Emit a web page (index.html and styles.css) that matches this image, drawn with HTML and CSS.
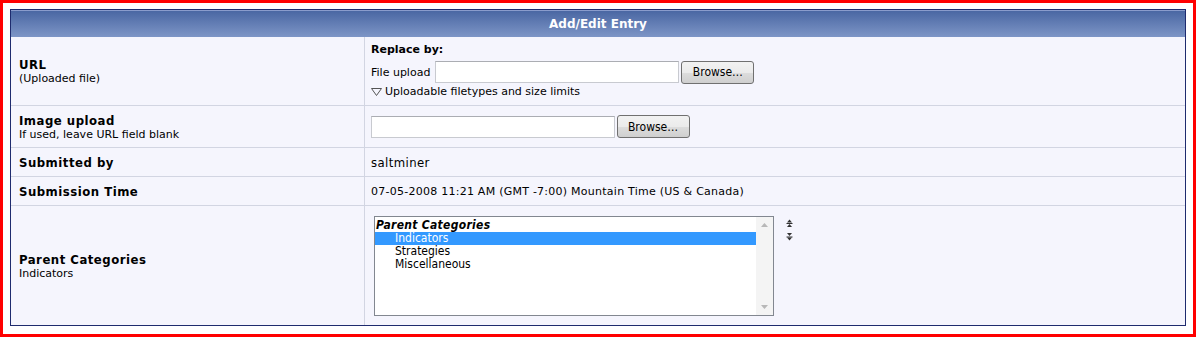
FILE: index.html
```html
<!DOCTYPE html>
<html lang="en">
<head>
    <meta charset="UTF-8">
    <title>Add/Edit Entry</title>
    <link rel="stylesheet" href="styles.css">
</head>
<body>

    <!-- Red frame round the whole form -->
    <div class="frame">
        <table class="entry">
            <colgroup>
                <col class="col-label">
                <col>
            </colgroup>

            <tr class="row-head">
                <th colspan="2">Add/Edit Entry</th>
            </tr>

            <!-- URL -->
            <tr class="row-url">
                <td class="label"><b>URL</b><span>(Uploaded file)</span></td>
                <td class="value">
                    <div class="replace">Replace by:</div>
                    <div class="upload-line">
                        File upload
                        <input type="text" class="text-box">
                        <button class="browse">Browse…</button>
                    </div>
                    <div class="limits">
                        <svg width="11" height="8" viewBox="0 0 11 8"><path d="M0.5 0.5 H10.5 L5.5 7.5 Z" fill="none" stroke="#555" stroke-width="1"/></svg>
                        Uploadable filetypes and size limits
                    </div>
                </td>
            </tr>

            <!-- Image upload -->
            <tr class="row-image">
                <td class="label"><b>Image upload</b><span>If used, leave URL field blank</span></td>
                <td class="value">
                    <input type="text" class="text-box">
                    <button class="browse">Browse…</button>
                </td>
            </tr>

            <tr class="row-plain">
                <td class="label"><b>Submitted by</b></td>
                <td class="value big">saltminer</td>
            </tr>

            <tr class="row-plain">
                <td class="label"><b>Submission Time</b></td>
                <td class="value time">07-05-2008 11:21 AM (GMT -7:00) Mountain Time (US &amp; Canada)</td>
            </tr>

            <!-- Parent categories -->
            <tr class="row-cats">
                <td class="label"><b>Parent Categories</b><span>Indicators</span></td>
                <td class="value">
                    <div class="cat-wrap">
                        <div class="listbox">
                            <div class="options">
                                <div class="group">Parent Categories</div>
                                <div class="opt selected">Indicators</div>
                                <div class="opt">Strategies</div>
                                <div class="opt">Miscellaneous</div>
                            </div>
                            <div class="scrollbar">
                                <svg width="7" height="4" viewBox="0 0 7 4"><path d="M0 4 L3.5 0 L7 4 Z" fill="#b8b8b8"/></svg>
                                <svg width="7" height="4" viewBox="0 0 7 4"><path d="M0 0 L3.5 4 L7 0 Z" fill="#b8b8b8"/></svg>
                            </div>
                        </div>
                        <div class="movers">
                            <!-- move up -->
                            <svg width="7" height="8" viewBox="0 0 7 8"><path d="M1 3.5 L3.5 0.5 L6 3.5 Z" fill="#333"/><rect x="0.5" y="4" width="6" height="1" fill="#333"/><path d="M1 8 L3.5 5 L6 8 Z" fill="#333"/></svg>
                            <!-- move down -->
                            <svg width="7" height="8" viewBox="0 0 7 8"><path d="M1 0 L3.5 3 L6 0 Z" fill="#333"/><rect x="0.5" y="3.5" width="6" height="1" fill="#333"/><path d="M1 4.5 L3.5 7.5 L6 4.5 Z" fill="#333"/></svg>
                        </div>
                    </div>
                </td>
            </tr>
        </table>
    </div>

</body>
</html>
```

FILE: styles.css
```css
html, body {
    margin: 0;
    padding: 0;
    background: #fff;
}

body {
    font-family: "DejaVu Sans", sans-serif;
    font-size: 11px;
    color: #000;
}

/* Red frame */
.frame {
    box-sizing: border-box;
    width: 1196px;
    height: 337px;
    border: 3px solid #f00;
    padding: 6px 7px 0 7px;
}

/* Form table */
.entry {
    width: 100%;
    border: 1px solid #1e2b6e;
    border-spacing: 0;
    table-layout: fixed;
    background: #f5f5fd;
}

.col-label {
    width: 354px;
}

.row-head th {
    height: 26px;
    padding: 0;
    background: linear-gradient(#4a67a3, #7d95c6);
    border-top: 1px solid #8a9ccc;
    color: #fff;
    font-size: 12px;
    font-weight: bold;
    text-align: center;
}

.entry td {
    padding: 0;
    border-bottom: 1px solid #d2d5e2;
    vertical-align: middle;
}

.entry tr:last-child td {
    border-bottom: none;
}

.row-url { height: 69px; }
.row-image { height: 42px; }
.row-plain { height: 29px; }
.row-cats { height: 119px; }

/* Left column */
.label {
    padding-left: 8px !important;
    border-right: 1px solid #d2d5e2;
}

.label b {
    display: block;
    font-family: "DejaVu Sans Condensed", "DejaVu Sans", sans-serif;
    font-size: 13px;
    letter-spacing: 0.5px;
    line-height: 15px;
}

.label span {
    display: block;
    font-size: 11px;
    line-height: 13px;
}

/* Right column */
.value {
    padding-left: 6px !important;
}

.value.big {
    font-family: "DejaVu Sans Condensed", "DejaVu Sans", sans-serif;
    font-size: 13px;
    letter-spacing: 0.4px;
}

.value.time {
    letter-spacing: 0.25px;
}

.replace {
    font-weight: bold;
    line-height: 14px;
    margin-bottom: 3px;
}

.upload-line {
    display: flex;
    align-items: center;
    gap: 5px;
    height: 24px;
}

.text-box {
    box-sizing: border-box;
    width: 244px;
    height: 22px;
    margin: 0;
    border: 1px solid #c8cad0;
    border-top-color: #abadb3;
    background: #fff;
    vertical-align: middle;
}

.browse {
    box-sizing: border-box;
    width: 73px;
    height: 23px;
    margin: 0 0 0 -2px;
    padding: 0;
    border: 1px solid #707070;
    border-radius: 3px;
    background: linear-gradient(#f2f2f2 0%, #ebebeb 50%, #dddddd 51%, #cfcfcf 100%);
    font-family: "DejaVu Sans Condensed", "DejaVu Sans", sans-serif;
    font-size: 12px;
    color: #000;
    vertical-align: middle;
}

.upload-line .browse {
    margin-left: -3px;
}

.limits {
    display: flex;
    align-items: center;
    gap: 3px;
    line-height: 14px;
    margin-top: 1px;
}

/* Categories list */
.cat-wrap {
    display: flex;
    align-items: flex-start;
    gap: 12px;
    padding-left: 3px;
}

.listbox {
    box-sizing: border-box;
    width: 400px;
    height: 100px;
    display: flex;
    border: 1px solid #828790;
    background: #fff;
}

.options {
    flex: 1;
    padding-top: 1px;
    font-family: "DejaVu Sans Condensed", "DejaVu Sans", sans-serif;
}

.group {
    font-size: 12px;
    font-weight: bold;
    font-style: italic;
    letter-spacing: 0.3px;
    line-height: 14px;
    padding-left: 1px;
}

.opt {
    font-size: 12px;
    line-height: 13px;
    padding-left: 20px;
}

.opt.selected {
    background: #3399ff;
    color: #fff;
}

.scrollbar {
    width: 17px;
    display: flex;
    flex-direction: column;
    justify-content: space-between;
    align-items: center;
    padding: 6px 0 6px;
    background: #f4f4f4;
}

.movers {
    display: flex;
    flex-direction: column;
    gap: 6px;
    padding-top: 3px;
}
```
